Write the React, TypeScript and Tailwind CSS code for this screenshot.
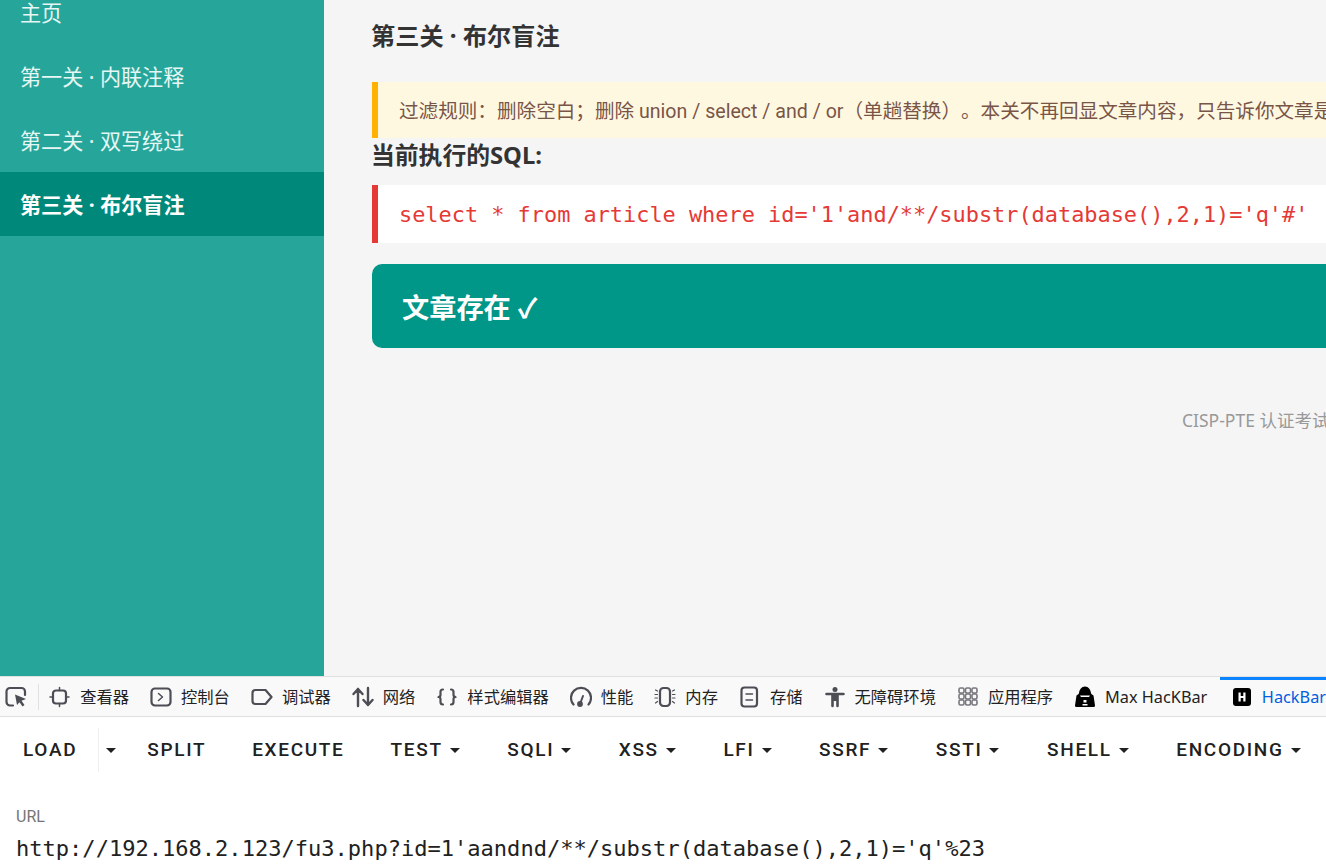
import type { ReactNode } from 'react';

const NAV = [
  { label: '主页', active: false },
  { label: '第一关 · 内联注释', active: false },
  { label: '第二关 · 双写绕过', active: false },
  { label: '第三关 · 布尔盲注', active: true },
];

function Svg({ children, w = 22 }: { children: ReactNode; w?: number }) {
  return (
    <svg width={w} height="22" viewBox={`0 0 ${w} 22`} fill="none" stroke="#4d4d55" strokeWidth="2.2" strokeLinecap="round" strokeLinejoin="round" className="shrink-0">
      {children}
    </svg>
  );
}

const TABS: { label: string; icon: ReactNode }[] = [
  {
    label: '查看器',
    icon: (
      <Svg>
        <rect x="4" y="4.5" width="13" height="13" rx="3" />
        <path d="M10.5 1.5v3M10.5 17.5v3M1 11h3M17 11h3" strokeWidth="1.5" />
      </Svg>
    ),
  },
  {
    label: '控制台',
    icon: (
      <Svg>
        <rect x="1.5" y="2.5" width="19" height="17" rx="3.5" />
        <path d="M8.5 7.5l4 3.5-4 3.5" strokeWidth="1.5" />
      </Svg>
    ),
  },
  {
    label: '调试器',
    icon: (
      <Svg>
        <path d="M4.5 4h10l6 7-6 7h-10a3 3 0 0 1-3-3V7a3 3 0 0 1 3-3z" />
      </Svg>
    ),
  },
  {
    label: '网络',
    icon: (
      <Svg>
        <path d="M6 20V3M1.500 8L6 3l4.500 5M16 2v17M11.500 14l4.500 5 4.500-5" strokeWidth="2.400" />
      </Svg>
    ),
  },
  {
    label: '样式编辑器',
    icon: (
      <Svg>
        <path d="M7 3.500c-2 0-2.500 1-2.500 2.500v3c0 1-.6 1.800-2 2 1.400.2 2 1 2 2v3c0 1.500.5 2.500 2.500 2.500M15 3.500c2 0 2.500 1 2.500 2.500v3c0 1 .6 1.800 2 2-1.400.2-2 1-2 2v3c0 1.500-.5 2.500-2.500 2.500" />
      </Svg>
    ),
  },
  {
    label: '性能',
    icon: (
      <Svg>
        <path d="M3.500 18.500A10 10 0 1 1 18.500 18.500" />
        <path d="M10 18l3-8" strokeWidth="2" />
        <circle cx="10" cy="18" r="1.800" fill="#4d4d55" />
      </Svg>
    ),
  },
  {
    label: '内存',
    icon: (
      <Svg>
        <rect x="6" y="2" width="10" height="18" rx="3.500" />
        <path d="M3.500 5L1.500 4M3.500 8.500H1M3.500 12H1M3.500 15.500L1.500 17M18.500 5l2-1M18.500 8.500H21M18.500 12H21M18.500 15.500l2 1.500" strokeWidth="1.200" />
      </Svg>
    ),
  },
  {
    label: '存储',
    icon: (
      <Svg w={19}>
        <rect x="1.500" y="1.500" width="15.500" height="19" rx="3" />
        <path d="M6 8h6.500M6 14h6.500" strokeWidth="1.500" />
      </Svg>
    ),
  },
  {
    label: '无障碍环境',
    icon: (
      <Svg w={20}>
        <circle cx="10" cy="3.500" r="2.500" fill="#4d4d55" stroke="none" />
        <path d="M1.500 8h17M7.500 8.500V20M12.500 8.500V20" strokeWidth="2.600" />
        <path d="M7 9h6v6H7z" fill="#4d4d55" stroke="none" />
      </Svg>
    ),
  },
  {
    label: '应用程序',
    icon: (
      <Svg w={20}>
        {[2, 8, 14].flatMap((y) =>
          [1, 7.500, 14].map((x) => <rect key={`${x}-${y}`} x={x} y={y} width="5" height="5" rx="1.500" stroke="#77777d" strokeWidth="1.600" />),
        )}
      </Svg>
    ),
  },
  {
    label: 'Max HacKBar',
    icon: (
      <svg width="22" height="22" viewBox="0 0 22 22" className="shrink-0">
        <path d="M11 0.500c-3.500 0-5.500 3-6 6.500-.2 1-.8 1.500-2.500 2.500l-1.500 10c0 1 .8 1.500 1.500 1.500h17c.7 0 1.500-.5 1.500-1.500l-1.500-10c-1.700-1-2.300-1.500-2.500-2.500-.5-3.500-2.500-6.500-6-6.500z" fill="#000" />
        <path d="M6 9.500h10l-1 1.500H7z" fill="#fff" />
        <path d="M9.500 14h3v2.500h-3zM8.500 18h5v1.500h-5z" fill="#fff" />
      </svg>
    ),
  },
];

const MENUS = ['TEST', 'SQLI', 'XSS', 'LFI', 'SSRF', 'SSTI', 'SHELL', 'ENCODING'];

function Caret() {
  return (
    <svg width="10" height="5" viewBox="0 0 10 5" className="shrink-0">
      <path d="M0 0h10L5 5z" fill="#212121" />
    </svg>
  );
}

export default function App() {
  return (
    <div className="h-[864px] w-[1326px] overflow-hidden flex flex-col bg-white [font-family:'Noto_Sans','Noto_Sans_CJK_SC',sans-serif]">
      <div className="h-[676px] flex shrink-0 bg-[#f5f5f5] overflow-hidden">
        <aside className="w-[324px] shrink-0 bg-[#26a69a] text-white">
          <nav className="-mt-[20px]">
            {NAV.map((item) => (
              <div
                key={item.label}
                className={`h-16 flex items-center pl-[20px] pt-[2px] text-[21.100px] ${item.active ? 'bg-[#00897b] font-bold' : 'text-[#e6f6f4]'}`}
              >
                {item.label}
              </div>
            ))}
          </nav>
        </aside>
        <main className="flex-1 min-w-0 pl-[48px] pt-[19px]">
          <h2 className="-ml-px text-[24.200px] leading-[34px] font-bold text-[#333]">第三关 · 布尔盲注</h2>
          <div className="mt-[29px] w-[1200px] h-[56px] flex items-center pl-[21px] pt-[3px] border-l-[6px] border-[#ffb300] bg-[#fff8e1] text-[19.600px] text-[#795548] whitespace-nowrap overflow-hidden [text-spacing-trim:space-all] [font-family:Roboto,'Noto_Sans_CJK_SC',sans-serif]">
            过滤规则：删除空白；删除 union / select / and / or（单趟替换）。本关不再回显文章内容，只告诉你文章是否存在。
          </div>
          <h3 className="-ml-px h-[36px] flex items-center text-[23.800px] font-bold text-[#333]">当前执行的SQL:</h3>
          <div className="mt-[11px] w-[1200px] h-[58px] flex items-center pl-[21px] pt-[2px] border-l-[6px] border-[#e53935] bg-white text-[21.900px] text-[#e53935] whitespace-nowrap [font-family:'DejaVu_Sans_Mono',monospace]">
            select * from article where id='1'and/**/substr(database(),2,1)='q'#'
          </div>
          <div className="mt-[21px] w-[1200px] h-[84px] flex items-center pl-[30px] pt-[5px] rounded-[10px] bg-[#009688] text-white text-[27.200px] font-bold">
            文章存在 ✓
          </div>
          <p className="mt-[60px] pl-[810px] w-[1200px] text-[17.500px] leading-[24px] text-[#999] whitespace-nowrap">CISP-PTE 认证考试</p>
        </main>
      </div>

      <div className="h-[41px] flex items-stretch bg-[#f9f9fa] border-y border-[#e0e0e2] text-[16.300px] text-[#222] shrink-0 whitespace-nowrap">
        <div className="w-[39px] flex items-center justify-between pl-[5px]">
          <Svg>
            <path d="M8 19.500H5a3.500 3.500 0 0 1-3.500-3.500V5.500A3.500 3.500 0 0 1 5 2h11.500A3.500 3.500 0 0 1 20 5.500V9" />
            <path d="M10 8.500l11 4.500-4.500 1.800 3 4.200-2 1.500-3-4.200L12 19z" fill="#4d4d55" stroke="none" />
          </Svg>
          <span className="w-px h-[26px] bg-[#e0e0e2]" />
        </div>
        {TABS.map((tab) => (
          <div key={tab.label} className="flex items-center gap-[9px] px-[10.500px]">
            <span className="w-[22px] flex justify-center">{tab.icon}</span>
            <span className="pt-px">{tab.label}</span>
          </div>
        ))}
        <div className="ml-[2px] flex items-center gap-[11px] pl-[13px] pb-[3px] border-t-[3px] border-[#0a84ff] text-[#0060df]">
          <svg width="18" height="18" viewBox="0 0 18 18" className="shrink-0">
            <rect width="18" height="18" rx="3" fill="#000" />
            <path d="M5.500 4.500h2.200v3.500h2.600V4.500h2.200v9h-2.200V10H7.700v3.500H5.500z" fill="#fff" />
          </svg>
          <span className="pt-px">HackBar</span>
        </div>
      </div>

      <div className="flex-1 min-h-0 bg-white">
        <div className="h-[65px] pt-[1px] flex items-center gap-[47.600px] pl-[23px] text-[19px] font-medium tracking-[1.670px] text-[#212121] whitespace-nowrap [font-family:Roboto,sans-serif]">
          <div className="flex items-center">
            <span>LOAD</span>
            <span className="ml-[21px] w-px h-[44px] bg-[#eeeeee]" />
            <span className="ml-[7px] flex"><Caret /></span>
          </div>
          <span className="-ml-[16.600px] -mr-[1.600px]">SPLIT</span>
          <span className="-mr-[1.500px]">EXECUTE</span>
          {MENUS.map((menu) => (
            <div key={menu} className="flex items-center gap-[7px]">
              <span>{menu}</span>
              <Caret />
            </div>
          ))}
        </div>
        <div className="pl-4 pt-[25px]">
          <div className="text-[16px] leading-5 text-[#757575] [font-family:Roboto,sans-serif]">URL</div>
          <div className="mt-[8px] text-[22.050px] leading-[28px] text-[#212121] whitespace-nowrap [font-family:'DejaVu_Sans_Mono',monospace]">
            http://192.168.2.123/fu3.php?id=1'aandnd/**/substr(database(),2,1)='q'%23
          </div>
        </div>
      </div>
    </div>
  );
}
